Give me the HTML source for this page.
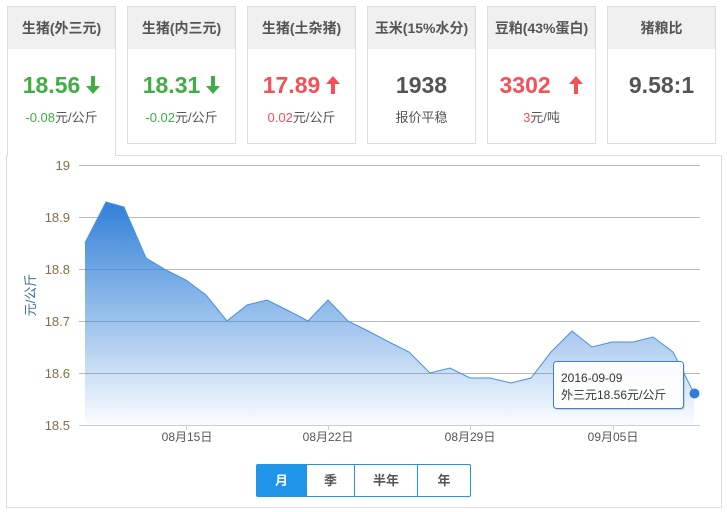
<!DOCTYPE html>
<html><head><meta charset="utf-8"><style>
*{margin:0;padding:0;box-sizing:border-box}
body{width:727px;height:512px;background:#fff;font-family:"Liberation Sans","Noto Sans CJK SC",sans-serif;position:relative;overflow:hidden}
.card{position:absolute;top:6px;width:109px;height:138px;border:1px solid #ddd;background:#fff;text-align:center}
.card .h{height:42px;background:#f0f0f0;line-height:42px;font-size:14px;font-weight:bold;color:#555}
.card .v{margin-top:22px;font-size:23px;font-weight:bold;line-height:28px}
.card .v svg{vertical-align:-1px;margin-left:6px}
.card .s{margin-top:8px;font-size:13px;color:#555}
.g{color:#3fae45}.r{color:#f64f56}.k{color:#555}
.panel{position:absolute;left:6px;top:155px;width:716px;height:353px;border:1px solid #ddd}
.btns{position:absolute;left:256px;top:464px;height:33px;display:flex;border:1px solid #1e95e8;border-radius:2px}
.btns div{height:31px;line-height:31px;text-align:center;font-size:13px;font-weight:bold;color:#555;border-left:1px solid #1e95e8}
.btns div:first-child{border-left:none;background:#1e95e8;color:#fff}
</style></head><body>
<div class="panel"></div>
<div class="card" style="left:7px;height:150px;border-bottom:none;z-index:2"><div class="h">生猪(外三元)</div><div class="v g">18.56<svg width="14" height="18" viewBox="0 0 14 18"><path d="M5,0H9V10H14L7,18L0,10H5Z" fill="#3fae45"/></svg></div><div class="s"><span class="g">-0.08</span>元/公斤</div></div>
<div class="card" style="left:127px"><div class="h">生猪(内三元)</div><div class="v g">18.31<svg width="14" height="18" viewBox="0 0 14 18"><path d="M5,0H9V10H14L7,18L0,10H5Z" fill="#3fae45"/></svg></div><div class="s"><span class="g">-0.02</span>元/公斤</div></div>
<div class="card" style="left:247px"><div class="h">生猪(土杂猪)</div><div class="v r">17.89<svg width="14" height="18" viewBox="0 0 14 18"><path d="M5,18H9V8H14L7,0L0,8H5Z" fill="#f64f56"/></svg></div><div class="s"><span class="r">0.02</span>元/公斤</div></div>
<div class="card" style="left:367px"><div class="h">玉米(15%水分)</div><div class="v k">1938</div><div class="s">报价平稳</div></div>
<div class="card" style="left:487px"><div class="h">豆粕(43%蛋白)</div><div class="v r">3302 &nbsp;<svg width="14" height="18" viewBox="0 0 14 18"><path d="M5,18H9V8H14L7,0L0,8H5Z" fill="#f64f56"/></svg></div><div class="s"><span class="r">3</span>元/吨</div></div>
<div class="card" style="left:607px"><div class="h">猪粮比</div><div class="v k">9.58:1</div></div>
<svg width="727" height="512" style="position:absolute;left:0;top:0" font-family="Liberation Sans, Noto Sans CJK SC, sans-serif">
<defs><linearGradient id="ga" gradientUnits="userSpaceOnUse" x1="0" y1="200" x2="0" y2="425"><stop offset="0" stop-color="#2f7fd8"/><stop offset="1" stop-color="#2f7fd8" stop-opacity="0.02"/></linearGradient></defs>
<g stroke="#bbb" stroke-width="1">
<line x1="79" y1="165.5" x2="700" y2="165.5"/><line x1="79" y1="217.5" x2="700" y2="217.5"/><line x1="79" y1="269.5" x2="700" y2="269.5"/><line x1="79" y1="321.5" x2="700" y2="321.5"/><line x1="79" y1="373.5" x2="700" y2="373.5"/>
</g>
<path d="M85,243 L106,202 L124,207 L146,258 L166,270 L186,280 L206,295 L227,321 L247,305 L267,300 L287,310 L308,321 L328,300 L348,321 L368,331 L389,342 L409,352 L430,373 L450,368 L470,378 L490,378 L511,383 L531,378 L551,352 L572,331 L592,347 L612,342 L633,342 L653,337 L673,352 L694,393 L694,425 L85,425 Z" fill="url(#ga)"/>
<line x1="79" y1="425.5" x2="700" y2="425.5" stroke="#bcd0e6"/>
<g stroke="#bcd0e6"><line x1="186.5" y1="425" x2="186.5" y2="430"/><line x1="328.5" y1="425" x2="328.5" y2="430"/><line x1="470.5" y1="425" x2="470.5" y2="430"/><line x1="613.5" y1="425" x2="613.5" y2="430"/></g>
<path d="M85,243 L106,202 L124,207 L146,258 L166,270 L186,280 L206,295 L227,321 L247,305 L267,300 L287,310 L308,321 L328,300 L348,321 L368,331 L389,342 L409,352 L430,373 L450,368 L470,378 L490,378 L511,383 L531,378 L551,352 L572,331 L592,347 L612,342 L633,342 L653,337 L673,352 L694,393" fill="none" stroke="#4a8fe0" stroke-width="1"/>
<circle cx="694.5" cy="393.5" r="5" fill="#2f7fd8"/>
<g font-size="13" fill="#8a6a4a" text-anchor="end">
<text x="70" y="170">19</text><text x="70" y="222">18.9</text><text x="70" y="274">18.8</text><text x="70" y="326">18.7</text><text x="70" y="378">18.6</text><text x="70" y="430">18.5</text>
</g>
<g font-size="12" fill="#555" text-anchor="middle">
<text x="187" y="441">08月15日</text><text x="328" y="441">08月22日</text><text x="470" y="441">08月29日</text><text x="613" y="441">09月05日</text>
</g>
<text transform="translate(35,295) rotate(-90)" font-size="13" fill="#3e6e9e" text-anchor="middle">元/公斤</text>
<rect x="555" y="363" width="130" height="47" rx="3" fill="#000" fill-opacity="0.12"/>
<rect x="553.5" y="361.5" width="130" height="47" rx="3" fill="#fff" fill-opacity="0.95" stroke="#3a7ed0"/>
<text x="561" y="382" font-size="12" fill="#333">2016-09-09</text>
<text x="561" y="399" font-size="12" fill="#333">外三元18.56元/公斤</text>
</svg>
<div class="btns"><div style="width:49px">月</div><div style="width:48px">季</div><div style="width:63px">半年</div><div style="width:53px">年</div></div>
</body></html>
